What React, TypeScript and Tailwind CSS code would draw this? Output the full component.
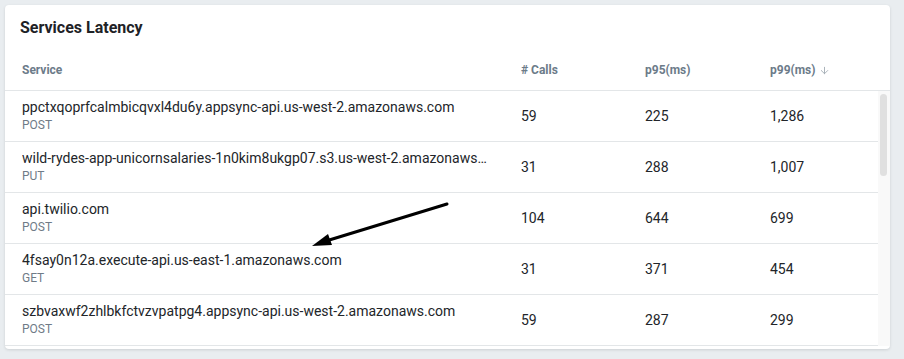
import { ArrowDown } from "lucide-react";

type Row = {
  service: string;
  method: string;
  calls: string;
  p95: string;
  p99: string;
};

const rows: Row[] = [
  { service: "ppctxqoprfcalmbicqvxl4du6y.appsync-api.us-west-2.amazonaws.com", method: "POST", calls: "59", p95: "225", p99: "1,286" },
  { service: "wild-rydes-app-unicornsalaries-1n0kim8ukgp07.s3.us-west-2.amazonaws.com", method: "PUT", calls: "31", p95: "288", p99: "1,007" },
  { service: "api.twilio.com", method: "POST", calls: "104", p95: "644", p99: "699" },
  { service: "4fsay0n12a.execute-api.us-east-1.amazonaws.com", method: "GET", calls: "31", p95: "371", p99: "454" },
  { service: "szbvaxwf2zhlbkfctvzvpatpg4.appsync-api.us-west-2.amazonaws.com", method: "POST", calls: "59", p95: "287", p99: "299" },
];

export default function App() {
  return (
    <div className="relative w-[904px] h-[359px] bg-[#e9edf0] p-[5px] font-['Roboto','Liberation_Sans',sans-serif]">
      <div className="w-[885px] h-[344px] bg-white rounded-[4px] shadow-[0_1px_3px_rgba(0,0,0,0.12)] flex flex-col">
        <h2 className="pt-[13px] pl-[15px] text-[16px] leading-[20px] font-bold text-[#1e2226]">
          Services Latency
        </h2>

        <div className="grid grid-cols-[516px_124px_125px_1fr] items-start h-[53px] pt-[24px] border-b border-[#e3e6e8] text-[12px] leading-[16px] font-bold text-[#6c7b89]">
          <div className="pl-[17px]">Service</div>
          <div># Calls</div>
          <div>p95(ms)</div>
          <div className="flex items-center gap-[3px] h-[16px]">
            p99(ms)
            <ArrowDown size={11} strokeWidth={2} className="text-[#a3adb5]" />
          </div>
        </div>

        <div className="flex">
          <div className="w-[873px]">
            {rows.map((r) => (
              <div
                key={r.service}
                className="grid grid-cols-[516px_124px_125px_1fr] h-[51px] border-b border-[#e3e6e8] text-[14px] leading-[20px] text-[#222529]"
              >
                <div className="pl-[17px] pt-[6px] pr-[31px] min-w-0">
                  <div className="truncate">{r.service}</div>
                  <div className="text-[12px] leading-[16px] text-[#6f7b87]">{r.method}</div>
                </div>
                <div className="flex items-center">{r.calls}</div>
                <div className="flex items-center">{r.p95}</div>
                <div className="flex items-center">{r.p99}</div>
              </div>
            ))}
          </div>
          <div className="w-[12px] bg-[#f9f9f9] pt-[3px] pl-[2px] pr-[3px]">
            <div className="h-[82px] rounded-full bg-[#e0e0e0]" />
          </div>
        </div>
      </div>

      <svg className="absolute left-0 top-0 pointer-events-none" width="904" height="359" viewBox="0 0 904 359">
        <line x1="447" y1="204" x2="326" y2="241" stroke="#000" strokeWidth="3" strokeLinecap="round" />
        <polygon points="312,246 328,234 332,245" fill="#000" />
      </svg>
    </div>
  );
}
